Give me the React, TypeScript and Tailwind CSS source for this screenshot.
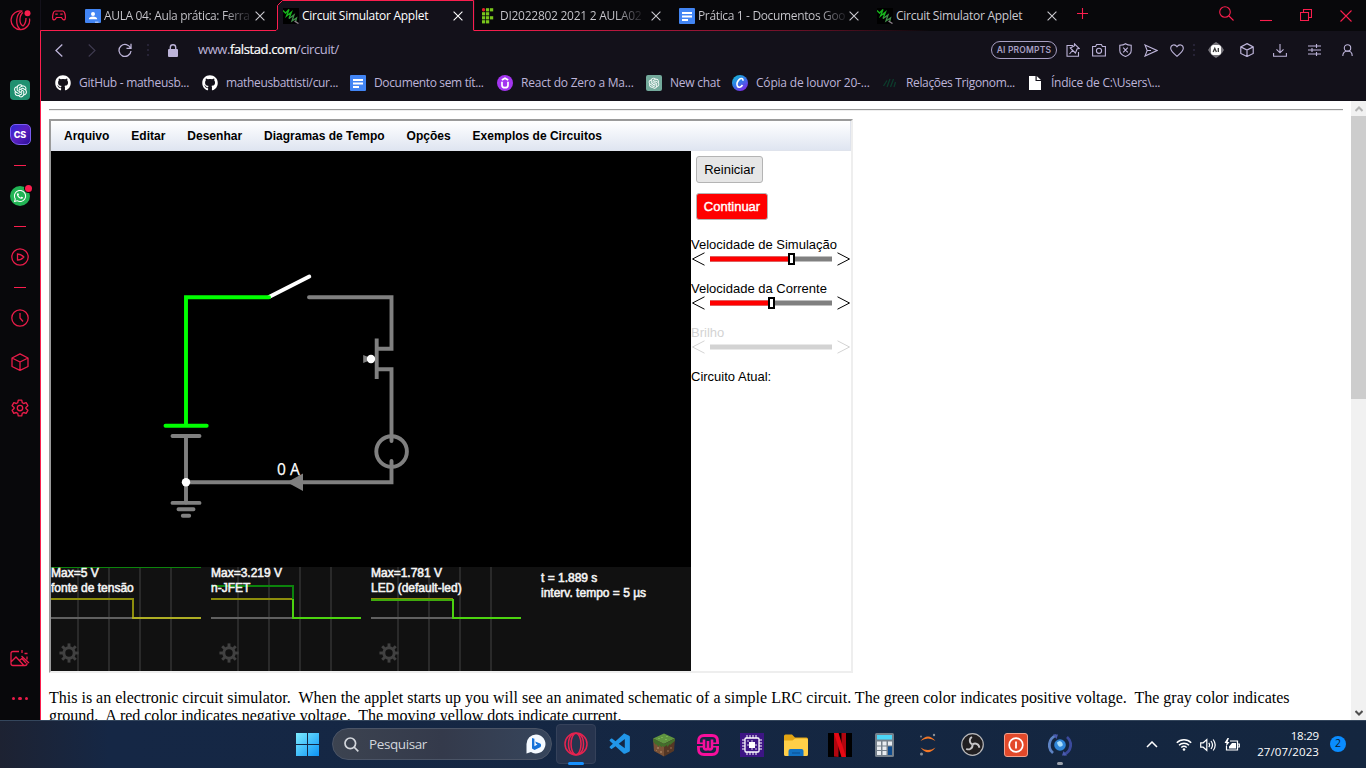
import React from "react";
import { FaGithub, FaWhatsapp } from "react-icons/fa";
import { AiOutlineOpenAI } from "react-icons/ai";
import { VscVscode } from "react-icons/vsc";

const UI = "font-['Open_Sans','Noto_Sans',sans-serif]";
const ARIAL = "font-['Liberation_Sans',Arial,sans-serif]";

type SvgProps = { children: React.ReactNode; w?: number; h?: number; box?: string; className?: string; sw?: number };

function Line({ children, w = 16, h = 16, box, className = "", sw = 1.1 }: SvgProps) {
  return (
    <svg width={w} height={h} viewBox={box ?? `0 0 ${w} ${h}`} fill="none" stroke="currentColor" strokeWidth={sw} className={`block shrink-0 ${className}`}>
      {children}
    </svg>
  );
}

function Slot({ className, children }: { className: string; children?: React.ReactNode }) {
  return <div className={`flex shrink-0 items-center justify-center ${className}`}>{children}</div>;
}

function Cross({ className = "" }: { className?: string }) {
  return (
    <Line w={10} h={10} className={className}>
      <path d="M.6 .6 9.4 9.4M9.4 .6 .6 9.4" />
    </Line>
  );
}

function Cube() {
  return (
    <Line w={18} h={18} sw={1.3}>
      <path d="M9 .8 17 5v8.500L9 17.400 1 13.500V5ZM1 5l8 4 8-4M9 9v8.400" strokeLinejoin="round" />
    </Line>
  );
}

function DocsIcon() {
  return (
    <svg width="16" height="16" viewBox="0 0 16 16" className="block shrink-0">
      <rect width="16" height="16" rx="1" fill="#4285f4" />
      <path d="M3 4h10v2H3zM3 7.500h10v2H3zM3 11h6v2H3z" fill="#fff" />
    </svg>
  );
}

function ClassroomIcon() {
  return (
    <svg width="16" height="16" viewBox="0 0 16 16" className="block shrink-0">
      <rect y="1" width="16" height="14" rx="1" fill="#4285f4" />
      <circle cx="8" cy="6" r="2" fill="#fff" />
      <path d="M3.800 11.300c0-2 2-2.800 4.200-2.800s4.200.8 4.200 2.800z" fill="#fff" />
      <path d="M10 13.500h3.500V15H10z" fill="#9fc1fa" />
    </svg>
  );
}

function CircuitIcon() {
  return (
    <svg width="16" height="16" viewBox="0 0 16 16" fill="none" className="block shrink-0">
      <rect width="16" height="16" fill="#000" />
      <path d="M0 2.500 2.500 5 6 1.500 3.500 8 8.500 4 6 10.500" stroke="#16b51c" strokeWidth="1.300" />
      <path d="M6 10.500 11 7 9 13 13.500 10 12.500 14" stroke="#3f8f48" strokeWidth="1.300" />
      <path d="m11.500 13 4 2.600" stroke="#8c7f8c" strokeWidth="1.300" />
    </svg>
  );
}

function InstituteIcon() {
  const cells: [number, number][] = [[4, 0], [8, 0], [0, 4], [4, 4], [0, 8], [4, 8], [8, 8], [0, 12], [4, 12]];
  return (
    <svg width="12" height="16" viewBox="0 0 12 16" className="block shrink-0">
      <circle cx="1.600" cy="1.800" r="1.700" fill="#e0202c" />
      {cells.map(([x, y]) => (
        <rect key={`${x}-${y}`} x={x} y={y + 0.2} width="3.200" height="3.200" fill="#79c51c" />
      ))}
    </svg>
  );
}

function Tab({ icon, label, active, tight, fade }: { icon: React.ReactNode; label: string; active?: boolean; tight?: boolean; fade?: boolean }) {
  return (
    <div className={`flex h-[31px] w-[198px] shrink-0 items-center pl-[6px] pr-3 ${active ? "bg-[#13111a] text-white" : "text-[#cbcad0]"}`}>
      {icon}
      <span
        className={`ml-[3px] text-[12px] whitespace-nowrap ${tight ? "tracking-[-0.35px]" : "tracking-[-0.27px]"} ${
          fade ? "bg-linear-to-r from-[#cbcad0] from-82% to-[#25242a] bg-clip-text text-transparent" : ""
        }`}
      >
        {label}
      </span>
      <Cross className="ml-auto" />
    </div>
  );
}

function TabBar() {
  return (
    <div className="relative flex h-[31px] bg-[#08080b]">
      <Slot className="w-[38px] pr-[2px] text-[#fa1e4e]">
        <Line w={14} h={11} sw={1.2}>
          <path d="M3 1h8c1.500 0 2.400 3.800 2.400 6.500 0 3-2.200 3.200-3.400.8L9.500 7.500h-5L4 8.300C2.800 10.700.6 10.500.6 7.500.6 4.800 1.500 1 3 1Z" />
          <path d="M3.300 4.200h2.400M8.300 4.200h2.400" />
        </Line>
      </Slot>
      <Tab icon={<ClassroomIcon />} label="AULA 04: Aula prática: Ferra" fade tight />
      <Tab icon={<CircuitIcon />} label="Circuit Simulator Applet" active />
      <Tab icon={<span className="ml-px mr-[3px]"><InstituteIcon /></span>} label="DI2022802 2021 2 AULA02" fade />
      <Tab icon={<DocsIcon />} label="Prática 1 - Documentos Goo" fade tight />
      <Tab icon={<CircuitIcon />} label="Circuit Simulator Applet" />
      <div className="flex flex-1 items-center text-[#fa1e4e]">
        <Line w={12} h={12} className="ml-[8px] -mt-1"><path d="M5.500 0v11M0 5.500h11" /></Line>
        <Line w={15} h={15} className="ml-[130px] -mt-1"><circle cx="6" cy="6" r="5.300" /><path d="m10 10 4.500 4.500" /></Line>
        <Line w={12} h={12} className="ml-[26px]"><path d="M0 10.500h12" /></Line>
        <Line w={12} h={12} className="ml-[28px] -mt-[2px]"><path d="M.5 3.500h8v8h-8zM3.500 3.500v-3h8v8h-3" /></Line>
        <Line w={12} h={12} className="ml-[28px]"><path d="m.5.5 11 11m0-11-11 11" /></Line>
      </div>
      <svg width="1326" height="31" viewBox="40 0 1326 31" fill="none" className="absolute top-0 -left-px">
        <defs>
          <linearGradient id="edge" gradientUnits="userSpaceOnUse" x1="480" x2="930" y1="0" y2="0">
            <stop stopColor="#fa1e4e" />
            <stop offset=".4" stopColor="#a01638" />
            <stop offset="1" stopColor="#fa1e4e" stopOpacity="0" />
          </linearGradient>
        </defs>
        <path d="M277 0h6l-6 6z" fill="#08080b" />
        <path d="M40.500 31v-.5H276l1.500-1.500V5.500l5-5H473.500V30.500" stroke="#fa1e4e" />
        <path d="M474 30h456v1H474z" fill="url(#edge)" />
      </svg>
    </div>
  );
}

function AddressBar() {
  return (
    <div className="flex h-[38px] items-center text-[#bdb4d9]">
      <Slot className="w-9"><Line w={8} h={13} sw={1.3}><path d="M7.300.5 1 6.500l6.300 6" /></Line></Slot>
      <Slot className="w-[30px] text-[#3f3b50]"><Line w={8} h={13}><path d="M.7.500 7 6.500l-6.300 6" /></Line></Slot>
      <Slot className="w-9"><Line w={14} h={14} sw={1.3}><path d="M12.600 5.200A6 6 0 1 0 13 8M13 .8v4.600H8.500" /></Line></Slot>
      <Slot className="w-[10px] text-[#34304a]"><Line w={2} h={12} sw={1.2}><path d="M1 0v2M1 5v2M1 10v2" /></Line></Slot>
      <Slot className="w-10">
        <Line w={10} h={13} sw={1.4}><path d="M2.300 6V3.500a2.700 2.700 0 0 1 5.400 0V6" /><rect y="5" width="10" height="8" rx="1" fill="currentColor" stroke="none" /></Line>
      </Slot>
      <div className="ml-[5px] text-[13px] tracking-[-0.4px]">www.<span className="text-white [-webkit-text-stroke:0.2px_#fff]">falstad.com</span>/circuit/</div>
      <div className="ml-auto flex items-center">
        <div className="mr-[3px] flex h-[18px] w-[66px] items-center justify-center rounded-full border border-[#a79fc2] font-['Inter',sans-serif] text-[8.5px] font-semibold tracking-[0.2px] text-[#a79fc2]">AI PROMPTS</div>
        <Slot className="w-[26px]"><Line w={14} h={14}><path d="M7 2.500H1v10.800h11.500V9" /><path d="m8.500.8 4.700 4.700-2 .3-1.800 4.200-5.200-5L8.300 3ZM6.500 7.500 3.500 11" /></Line></Slot>
        <Slot className="w-[26px]"><Line w={14} h={14}><path d="M.6 3.500h3l1-2h4.800l1 2h3v9.500H.6z" /><circle cx="7" cy="7.800" r="2.600" /></Line></Slot>
        <Slot className="w-[26px]"><Line w={13} h={14}><path d="M6.500.7c1.800 1.300 3.700 1.500 5.700 1.500v5.300c0 3-3 5-5.700 6C3.800 12.500.8 10.500.8 7.500V2.200c2 0 3.900-.2 5.700-1.500ZM4.200 4.700l4.600 4.600m0-4.600L4.200 9.300" /></Line></Slot>
        <Slot className="w-[26px]"><Line w={14} h={13}><path d="M1 .9 13 6.500 1 12.100 3.200 6.500ZM3.200 6.500H7" /></Line></Slot>
        <Slot className="w-[26px]"><Line w={14} h={13}><path d="M7 12.300C3 9 .7 7 .7 4.300.7.600 5 -.4 7 2.800 9-.4 13.300.600 13.300 4.300 13.300 7 11 9 7 12.300Z" /></Line></Slot>
        <Slot className="w-2 text-[#34304a]"><Line w={2} h={12} sw={1.2}><path d="M1 0v2M1 5v2M1 10v2" /></Line></Slot>
        <Slot className="w-9">
          <svg width="16" height="16" viewBox="0 0 16 16" className="block">
            <path d="M8 0l3 2 3 3 2 3-2 3-3 3-3 2-3-2-3-3-2-3 2-3 3-3z" fill="#77757c" />
            <rect x="3" y="3" width="10" height="10" rx="2.500" fill="#fff" />
            <path d="M5.200 10 6.800 6.300 8.400 10M10.300 6v4" stroke="#333" strokeWidth="1.300" fill="none" />
          </svg>
        </Slot>
        <Slot className="w-[26px]"><Line w={14} h={14} box="0 0 18 18" sw={1.5}><path d="M9 .8 17 5v8.500L9 17.400 1 13.500V5ZM1 5l8 4 8-4M9 9v8.400" /></Line></Slot>
        <Slot className="w-10"><Line w={14} h={14}><path d="M7 1v8.500M3.500 6.300 7 9.800l3.500-3.500M.6 10v3.200h12.800V10" /></Line></Slot>
        <Slot className="w-7"><Line w={13} h={12}><path d="M0 2h13M0 6h13M0 10h13M8.500 0v4M4 4v4M8.500 8v4" /></Line></Slot>
        <Slot className="w-[38px]"><Line w={11} h={12}><circle cx="5.500" cy="4" r="3.200" /><path d="M.8 12C.8 9 2.500 7 5.500 7s4.700 2 4.700 5" /></Line></Slot>
      </div>
    </div>
  );
}

function Bookmark({ className = "", icon, label }: { className?: string; icon: React.ReactNode; label: string }) {
  return (
    <div className={`flex shrink-0 items-center gap-2 ${className}`}>
      {icon}
      <span className="text-[12px] whitespace-nowrap">{label}</span>
    </div>
  );
}

function Bookmarks() {
  return (
    <div className="flex h-8 items-center pb-1 pl-[14px] text-[#bdb4d9]">
      <Bookmark className="w-[147px] tracking-[-0.28px]" icon={<FaGithub size={16} color="#fff" />} label="GitHub - matheusb..." />
      <Bookmark className="w-[148px] tracking-[-0.35px]" icon={<FaGithub size={16} color="#fff" />} label="matheusbattisti/cur..." />
      <Bookmark className="w-[147px] tracking-[-0.35px]" icon={<DocsIcon />} label="Documento sem tít..." />
      <Bookmark
        className="w-[149px] tracking-[-0.22px]"
        icon={
          <svg width="16" height="16" viewBox="0 0 16 16" className="block" fill="none">
            <circle cx="8" cy="8" r="8" fill="#a435f0" />
            <path d="M5 6.800v3.400c0 1.700 1.200 2.500 3 2.500s3-.8 3-2.500V6.800M4.800 5 8 3.200 11.200 5" stroke="#fff" strokeWidth="1.700" />
          </svg>
        }
        label="React do Zero a Ma..."
      />
      <Bookmark className="w-[86px] tracking-[-0.25px]" icon={<Slot className="size-4 rounded-[2px] bg-[#74aa9c] text-white"><AiOutlineOpenAI size={14} /></Slot>} label="New chat" />
      <Bookmark
        className="w-[150px] tracking-[-0.2px]"
        icon={
          <svg width="16" height="16" viewBox="0 0 16 16" className="block" fill="none">
            <defs><linearGradient id="canva" x2=".7" y2="1"><stop stopColor="#14c4d0" /><stop offset=".5" stopColor="#2f7de8" /><stop offset="1" stopColor="#7d2ae8" /></linearGradient></defs>
            <circle cx="8" cy="8" r="8" fill="url(#canva)" />
            <path d="M10.800 5.800c.8-2.600-2-3-3.700-1.200-1.900 2-2.500 4.500-1.800 6.300.9 2.200 3.800 1.500 5.200-.9" stroke="#fff" strokeWidth="1.600" />
          </svg>
        }
        label="Cópia de louvor 20-..."
      />
      <Bookmark className="w-[145px] tracking-[-0.35px]" icon={<Line w={16} h={16} sw={1.3} className="text-[#0d3b2c]"><path d="M1.500 11 5 5.500M5 12 8 4M8.500 12l3-8M12 12l1.500-5" /></Line>} label="Relações Trigonom..." />
      <Bookmark
        className="tracking-[-0.25px]"
        icon={<svg width="16" height="16" viewBox="0 0 16 16" className="block"><path d="M2 1h6.500v5H14v9H2zM9.700 1 14 4.900H9.700z" fill="#fff" /></svg>}
        label="Índice de C:\Users\..."
      />
    </div>
  );
}

function SideBar() {
  const dash = <span className="h-px w-3 bg-[#fa1e4e]" />;
  const dot = "size-[3.500px] rounded-full bg-[#e81c49]";
  return (
    <div className="flex w-10 shrink-0 flex-col bg-[#08080b] text-[#e81c49]">
      <Slot className="h-10">
        <Line w={21} h={21} sw={1.3}>
          <path d="M12.500 1.200A9.300 9.300 0 1 0 19.500 8.500" />
          <path d="M12 1.300C5.500 3.500 5 15.500 10.500 19.800" />
          <path d="M13 2.500C8.800 6 9 14 13 16c1.800-1.500 3-4.500 3-8" />
          <circle cx="17.500" cy="3.300" r="3" fill="#fa1e4e" stroke="none" />
        </Line>
      </Slot>
      <Slot className="mt-[30px] h-10"><Slot className="size-5 rounded-[4px] bg-[#1f9070] text-white"><AiOutlineOpenAI size={17} /></Slot></Slot>
      <Slot className="h-[49px]">
        <div className="flex size-[21px] items-center justify-center rounded-[5px] rounded-bl-[9px] border border-[#7a5cf0] bg-linear-to-br from-[#2a25d6] via-[#5b1fc0] to-[#2b0e9a] font-['Inter',sans-serif] text-[9px] font-extrabold text-white">CS</div>
      </Slot>
      <Slot className="h-3">{dash}</Slot>
      <Slot className="h-[50px]">
        <div className="relative flex size-5 items-center justify-center rounded-full bg-[#22b455] text-white">
          <FaWhatsapp size={14} />
          <span className="absolute -top-px -right-[2px] size-[7px] rounded-full bg-[#fa1e4e] ring-1 ring-[#08080b]" />
        </div>
      </Slot>
      <Slot className="h-[10px]">{dash}</Slot>
      <Slot className="h-[52px]"><Line w={18} h={18} sw={1.3}><circle cx="9" cy="9" r="8.200" /><path d="M6.500 6v6c3 0 5-1.500 6.300-3C11.500 7.500 9.500 6 6.500 6Z" /></Line></Slot>
      <Slot className="h-2">{dash}</Slot>
      <Slot className="h-[54px]"><Line w={18} h={18} sw={1.3}><circle cx="9" cy="9" r="8.200" /><path d="M9 4v5l3 3.500" /></Line></Slot>
      <Slot className="h-[34px]"><Cube /></Slot>
      <Slot className="h-[58px]">
        <Line w={18} h={18} box="0 0 24 24" sw={1.8}>
          <circle cx="12" cy="12" r="3.600" />
          <path d="M9.700 1.500h4.600l.7 3.400 1.900 1.100 3.300-1.100 2.300 4-2.600 2.300v1.600l2.600 2.300-2.300 4-3.300-1.100-1.900 1.100-.7 3.400H9.700L9 19.100 7.100 18l-3.300 1.100-2.300-4 2.600-2.300v-1.600L1.500 8.900l2.300-4L7.100 6 9 4.900Z" strokeLinejoin="round" />
        </Line>
      </Slot>
      <div className="flex-1" />
      <Slot className="h-[38px]">
        <Line w={20} h={17} sw={1.3}>
          <path d="M9 1.500H3Q1 1.500 1 3.500v10q0 2 2 2h12q2 0 2-2V13M1.500 11.500 6 7l7.500 8M9 11l3-2.500 4 4.500M11.500 6l7.500 7M14.500 3.500h3M17 6.500v3M12 0v3" />
        </Line>
      </Slot>
      <Slot className="h-[43px] gap-[3px]"><i className={dot} /><i className={dot} /><i className={dot} /></Slot>
    </div>
  );
}

function Gear({ x, y }: { x: number; y: number }) {
  return (
    <g transform={`translate(${x} ${y})`} stroke="#414141" fill="none">
      <circle r="5.200" strokeWidth="3" />
      {[0, 45, 90, 135, 180, 225, 270, 315].map((a) => (
        <path key={a} d="M0-6v-3.600" strokeWidth="2.900" transform={`rotate(${a})`} />
      ))}
    </g>
  );
}

function Scope({ x }: { x: number }) {
  return (
    <g>
      <path d={`M${x + 27} 567v104M${x + 58} 567v104M${x + 89} 567v104M${x + 120} 567v104`} stroke="#2a2a2a" strokeWidth="2" />
      <path d={`M${x} 618h150`} stroke="#606060" strokeWidth="2" />
      <Gear x={x + 18} y={653} />
    </g>
  );
}

function Circuit() {
  return (
    <svg width="640" height="520" viewBox="51 151 640 520" className={`block shrink-0 bg-black ${ARIAL}`} fill="none">
      <g strokeWidth="3.900" strokeLinecap="round">
        <g stroke="#808080">
          <path d="M309 297.300H391.500V348.800H378M378 369.300H391.500V441M391.500 461V482.300H186M186 436V503M172.500 436H199.500M172.500 502.900h27M178.500 509.200h15M182.800 515.700h6.400" />
          <circle cx="391.600" cy="451.500" r="15.300" />
          <path d="M376.700 338.500v40.500" strokeLinecap="butt" />
        </g>
        <path d="M269 297 309.300 276.600" stroke="#fff" />
        <path d="M269 297.300H186V425.700M165.500 425.700H206.700" stroke="#0f0" />
      </g>
      <path d="M287 482.300 303 473.500V491ZM363.200 355l5 2v4l-5 2z" fill="#808080" />
      <circle cx="371" cy="359" r="4.200" fill="#fff" />
      <circle cx="186" cy="482.300" r="4.200" fill="#fff" />
      <text x="277" y="475" fill="#fff" stroke="#fff" strokeWidth=".25" className={UI} fontSize="15.500">0 A</text>

      <path d="M51 567h640v104H51z" fill="#111" />
      <Scope x={51} />
      <Scope x={211} />
      <Scope x={371} />
      <g strokeWidth="2">
        <path d="M51 567.500h150" stroke="#0c840c" strokeWidth="1" />
        <path d="M51 599h82v19" stroke="#8d8d0c" />
        <path d="M132 618h69" stroke="#aeae24" />
        <path d="M211 599h82" stroke="#8d8d0c" />
        <path d="M211 586h82v13" stroke="#0c840c" />
        <path d="M293 599v19h68" stroke="#4cd410" />
        <path d="M371 599.500h82" stroke="#8d8d0c" strokeWidth="3" />
        <path d="M371 600h82" stroke="#3faa0c" />
        <path d="M453 599v19h68" stroke="#4cd410" />
      </g>
      <g fill="#f4f4f4" stroke="#f4f4f4" strokeWidth=".55" fontSize="12">
        <text x="51" y="577">Max=5 V</text>
        <text x="51" y="592">fonte de tensão</text>
        <text x="211" y="577">Max=3.219 V</text>
        <text x="211" y="592">n-JFET</text>
        <text x="371" y="577">Max=1.781 V</text>
        <text x="371" y="592">LED (default-led)</text>
        <text x="541" y="582">t = 1.889 s</text>
        <text x="541" y="597">interv. tempo = 5 µs</text>
      </g>
    </svg>
  );
}

function Slider({ label, value, disabled }: { label: string; value?: number; disabled?: boolean }) {
  return (
    <div className={`h-11 ${disabled ? "text-[#d3d3d3]" : "text-black"}`}>
      <div className="h-[15px] leading-[15px] whitespace-nowrap">{label}</div>
      <svg width="160" height="14" viewBox="0 0 160 14" fill="none" className="block">
        <path d="M13.500.8 1.500 7l12 6.200M146.500.8l12 6.200-12 6.200" stroke="currentColor" />
        <path d="M19 7h122" stroke={disabled ? "#d3d3d3" : "#808080"} strokeWidth="5" />
        {value !== undefined && (
          <g>
            <path d={`M19 7H${value}`} stroke="#f00" strokeWidth="5" />
            <rect x={value - 2.5} y="2" width="5" height="10" fill="#fff" stroke="#000" strokeWidth="2" />
          </g>
        )}
      </svg>
    </div>
  );
}

function Applet() {
  return (
    <div className={`mt-2 h-[554px] w-[804px] border-2 border-t-[#9a9a9a] border-r-[#eeeeee] border-b-[#eeeeee] border-l-[#9a9a9a] ${ARIAL}`}>
      <div className="flex h-[30px] items-center gap-[22px] border border-t-0 border-l-0 border-[#dfe3ec] bg-linear-to-b from-white to-[#dfe5f1] pl-[13px] text-[12px] font-bold text-black">
        <span>Arquivo</span><span>Editar</span><span>Desenhar</span><span>Diagramas de Tempo</span><span>Opções</span><span>Exemplos de Circuitos</span>
      </div>
      <div className="flex">
        <Circuit />
        <div className="flex w-40 flex-col items-start text-[13px] text-black">
          <button className="mt-[5px] ml-[5px] h-[27px] w-[67px] rounded-[3px] border border-[#b4b4b4] bg-[#e6e6e6]">Reiniciar</button>
          <button className="mt-[10px] mb-[17px] ml-[5px] h-[27px] w-[72px] rounded-[3px] border border-[#b4b4b4] bg-[#ff0000] text-white [-webkit-text-stroke:0.4px_#fff]">Continuar</button>
          <Slider label="Velocidade de Simulação" value={100.5} />
          <Slider label="Velocidade da Corrente" value={80.5} />
          <Slider label="Brilho" disabled />
          <div className="leading-[15px]">Circuito Atual:</div>
        </div>
      </div>
    </div>
  );
}

function Page() {
  return (
    <div className="flex h-[619px] bg-white">
      <div className="min-w-0 flex-1 overflow-hidden pt-2 pr-2 pl-2">
        <div className="h-[2px] border-t border-b border-t-[#9a9a9a] border-b-[#eeeeee]" />
        <Applet />
        <p className="mt-4 font-['Liberation_Serif',serif] text-[16px] leading-[18px] whitespace-nowrap text-black">
          This is an electronic circuit simulator.&nbsp; When the applet starts up you will see an animated schematic of a simple LRC circuit. The green color indicates positive voltage.&nbsp; The gray color indicates
          <br />
          <span className="tracking-[-0.02px]">ground.&nbsp; A red color indicates negative voltage.&nbsp; The moving yellow dots indicate current.</span>
        </p>
      </div>
      <div className="flex w-[15px] flex-col items-center bg-[#f1f1f1]">
        <Slot className="h-[15px] text-[#b3b3b3]"><Line w={8} h={6} sw={2}><path d="M.5 5 4 1.500 7.500 5" /></Line></Slot>
        <div className="h-[283px] w-full bg-[#cdcdcd]" />
        <Slot className="mt-auto h-[15px] text-[#505050]"><Line w={8} h={6} sw={2}><path d="M.5 1 4 4.500 7.500 1" /></Line></Slot>
      </div>
    </div>
  );
}

function GrassBlock() {
  return (
    <svg width="24" height="24" viewBox="0 0 24 24">
      <path d="M12 .500 23 5.500 12 11 1 5.500Z" fill="#5f9440" />
      <path d="M1 5.500 12 11V23.500L2 18Z" fill="#7a5237" />
      <path d="M23 5.500 12 11V23.500L22 18Z" fill="#553725" />
      <path d="M1 5.500 12 11v3l-2-1v1.500L7 12v2l-3-3v1L1.200 8.500ZM23 5.500 12 11v3l3-2v2l3-3v1l4.800-4Z" fill="#436e2b" />
      <path d="M5 14h2v2H5zM8 18h2v2H8zM4 17h1v1H4z" fill="#9b7354" />
      <path d="M15 17h2v2h-2zM18 14h2v2h-2z" fill="#77523a" />
      <path d="M9 4h2v1H9zM13 6h2v1h-2zM6 5h2v1H6zM14 3h2v1h-2z" fill="#78b052" />
    </svg>
  );
}

function TaskBar() {
  return (
    <div className="relative flex h-12 items-center border-t border-[#34465c] bg-linear-to-r from-[#1d2232] via-[#152745] via-8% to-[#14263f]">
      <svg width="23" height="23" viewBox="0 0 23 23" className="ml-[296px] shrink-0">
        <defs><linearGradient id="win" gradientUnits="userSpaceOnUse" x1="0" y1="0" x2="23" y2="23"><stop stopColor="#7cebff" /><stop offset="1" stopColor="#0c93f5" /></linearGradient></defs>
        <path d="M0 0h11v11H0zM12 0h11v11H12zM0 12h11v11H0zM12 12h11v11H12z" fill="url(#win)" />
      </svg>
      <div className="mb-px ml-[13px] flex h-8 w-[220px] shrink-0 items-center rounded-full border border-[#4b5466] bg-linear-to-r from-[#3c4350] via-[#343a4b] to-[#36455c] pr-[5px] pl-[11px] text-[#d3d6dc]">
        <Line w={15} h={15} sw={1.7}><circle cx="6.300" cy="6.300" r="5.300" /><path d="m10 10 4.300 4.300" /></Line>
        <span className="ml-[10px] text-[13.500px] tracking-[-0.4px]">Pesquisar</span>
        <svg width="20" height="20" viewBox="0 0 20 20" className="ml-auto">
          <path d="M10 .5A9.500 9.500 0 1 1 5 18.100L.5 19.500V10A9.500 9.500 0 0 1 10 .5Z" fill="#f4f9ff" />
          <path d="M6 4l2.400.8v7.500L11.500 10.500 10 9.800 9.200 7.600l5 1.800c1.200.6 1.200 3 0 3.800L8.500 16 6 14.500Z" fill="#1672d8" />
        </svg>
      </div>
      <div className="ml-[2px] flex">
        <div className="relative flex h-10 w-11 items-center justify-center">
          <div className="mb-px flex size-10 items-center justify-center rounded-[4px] border border-[#35415a] bg-[#27344e] text-[#e5234f]">
            <Line w={24} h={24} sw={1.500}><circle cx="12" cy="12" r="11" /><ellipse cx="12" cy="12" rx="5" ry="10.800" /><path d="M9 2c-6 3-6 17 0 20M15 2c6 3 6 17 0 20" /></Line>
          </div>
          <span className="absolute bottom-0 h-[3px] w-4 rounded-full bg-[#1791ff]" />
        </div>
        <Slot className="w-11 text-[#2196e8]"><VscVscode size={25} /></Slot>
        <Slot className="w-11"><GrassBlock /></Slot>
        <Slot className="w-11">
          <svg width="24" height="24" viewBox="0 0 24 24" fill="none" stroke="#f70f9c">
            <path d="M2.500 10.500V8Q2.500 2.500 8 2.500h8q5.500 0 5.500 5.500v2.500M2.500 13.500V16q0 5.500 5.500 5.500h8q5.500 0 5.500-5.500v-2.500" strokeWidth="2.800" />
            <path d="M1 10.200h6M17 10.200h6M1 13.800h6M17 13.800h6" strokeWidth="1.600" />
            <path d="M8 6.500v7.500q0 2.500 2 2.500T12 14V8v6q0 2.500 2 2.500T16 14V6.500" strokeWidth="2.600" />
          </svg>
        </Slot>
        <Slot className="w-11">
          <svg width="24" height="24" viewBox="0 0 24 24" fill="none" stroke="#fff">
            <rect width="24" height="24" fill="#3d1584" stroke="none" />
            <rect x="5" y="5" width="14" height="14" rx="1" strokeWidth="1.300" />
            <rect x="9" y="9" width="6" height="6" fill="#fff" stroke="none" />
            <path d="M2 7h3M2 10h3M2 13h3M2 16h3M19 7h3M19 10h3M19 13h3M19 16h3M7 2v3M10 2v3M13 2v3M16 2v3M7 19v3M10 19v3M13 19v3M16 19v3" />
            <path d="M7 8h2M7 12h2M15 12h2M12 7v2M12 15v2M15 16h2" strokeWidth=".8" />
          </svg>
        </Slot>
        <Slot className="w-11">
          <svg width="24" height="22" viewBox="0 0 24 22">
            <path d="M0 2Q0 .5 1.500.5H8l3 3h11.500Q24 3.500 24 5v5H0Z" fill="#e2a413" />
            <path d="M0 6.500h8.500L11 4.500h11.500Q24 4.500 24 6v14.500Q24 22 22.500 22h-21Q0 22 0 20.500Z" fill="#ffcf48" />
            <path d="M4.500 22v-5q0-2 2-2h11q2 0 2 2v5Z" fill="#1272c4" /><path d="M8 18.500h8v1H8z" fill="#0a4f92" />
          </svg>
        </Slot>
        <Slot className="w-11">
          <svg width="24" height="24" viewBox="0 0 24 24"><path d="M0 0h24v24H0z" fill="#000" /><path d="M6 0h4.500v24L6 23.500zM13.500 0H18v24l-4.500-.5z" fill="#b1060f" /><path d="M6 0h4.500L18 24h-4.500z" fill="#e50914" /></svg>
        </Slot>
        <Slot className="w-11">
          <svg width="19" height="24" viewBox="0 0 19 24">
            <rect width="19" height="24" rx="1.500" fill="#75808b" /><path d="M2 2h15v4.500H2z" fill="#4cd6f7" />
            <path d="M2 8.500h4v4H2zM7.500 8.500h4v4h-4zM13 8.500h4v4h-4zM2 13.500h4v3.500H2zM7.500 13.500h4v3.500h-4zM2 18h4v4H2zM7.500 18h4v4h-4z" fill="#e8ecf0" /><path d="M13 13.500h4V22h-4z" fill="#0e4b8d" />
          </svg>
        </Slot>
        <Slot className="w-11">
          <svg width="18" height="23" viewBox="0 0 18 23">
            <path d="M1.500 8Q9-1 16.500 8 9 2.800 1.500 8ZM1.500 14.500Q9 24 16.500 14.500 9 19.700 1.500 14.500Z" fill="#f37726" />
            <circle cx="15" cy="2" r="1.200" fill="#8b8f96" /><circle cx="2.500" cy="21" r="1.500" fill="#8b8f96" /><circle cx="2" cy="3.500" r=".9" fill="#8b8f96" />
          </svg>
        </Slot>
        <Slot className="w-11">
          <svg width="23" height="23" viewBox="0 0 23 23" fill="none">
            <circle cx="11.500" cy="11.500" r="10.800" fill="#211f21" stroke="#b9b9bb" strokeWidth="1.200" />
            {[0, 120, 240].map((a) => (
              <path key={a} transform={`rotate(${a} 11.500 11.500)`} d="M11.500 11.500C8 10 8 5.500 11 4" stroke="#c6c5c8" strokeWidth="1.900" />
            ))}
          </svg>
        </Slot>
        <Slot className="w-11">
          <svg width="24" height="24" viewBox="0 0 24 24" fill="none">
            <rect x=".5" y=".5" width="23" height="23" rx="2.500" fill="#e3492a" stroke="#f2a08d" />
            <circle cx="12" cy="12" r="6.800" stroke="#fff" strokeWidth="1.700" /><path d="M12 8.500v7" stroke="#fff" strokeWidth="1.800" />
          </svg>
        </Slot>
        <div className="relative flex w-11 items-center justify-center">
          <svg width="24" height="24" viewBox="0 0 24 24" fill="none">
            <circle cx="12" cy="12" r="5.800" fill="#2f86d8" /><path d="M9 9.500q3-3 5 0t-1 4-4-4Z" fill="#a8defc" />
            <path d="M8 2.500A10.300 10.300 0 0 0 5 20" stroke="#5d83c4" strokeWidth="2.800" /><path d="M16 21.500A10.300 10.300 0 0 0 19 4" stroke="#3b4a9c" strokeWidth="2.800" />
            <path d="M5 1.500h5L8.500 6ZM19 22.500h-5l1.500-4.500Z" fill="#4a5bb0" />
          </svg>
          <span className="absolute bottom-0 h-[3px] w-[6px] rounded-full bg-[#9aa1ac]" />
        </div>
      </div>
      <div className="ml-auto flex items-center pr-5 text-white">
        <Line w={12} h={7} sw={1.500} className="mr-[18px]"><path d="m1 6 5-5 5 5" /></Line>
        <Line w={16} h={13} sw={1.500} className="mr-[8px]"><path d="M.8 4.800a10.200 10.200 0 0 1 14.400 0M3 7.300a7 7 0 0 1 10 0M5.300 9.500a4 4 0 0 1 5.400 0" /><circle cx="8" cy="11.500" r="1.300" fill="currentColor" stroke="none" /></Line>
        <Line w={16} h={14} sw={1.200} className="mr-[8px]"><path d="M.7 4.800h2.500L6.800 1.500v11L3.200 9.200H.7ZM8.800 4.800q1.500 2.200 0 4.400M11 3q3 4 0 8M13.200 1.500q4 5.500 0 11" /></Line>
        <Line w={16} h={14} sw={1.200} className="mr-[17px]"><path d="M6 3h7.500v9h-11V8M14 6h1.300v3H14" /><path d="M5 10V8.500L8 5h4v5.500H5ZM3.500 0 .5 5h2L2 8.500 5.500 4h-2L5 0Z" fill="currentColor" stroke="none" /></Line>
        <div className="mr-[11px] mb-px w-[62px] text-right text-[11.500px] leading-4 whitespace-nowrap"><div className="tracking-[-0.2px]">18:29</div><div className="tracking-[0.08px]">27/07/2023</div></div>
        <Slot className="mb-px size-4 rounded-full bg-[#0a8cff] text-[10.500px] text-[#0c1a2c]">2</Slot>
      </div>
    </div>
  );
}

export default function App() {
  return (
    <div className={`flex h-[768px] w-[1366px] flex-col overflow-hidden bg-[#13111a] ${UI}`}>
      <div className="flex h-[720px]">
        <SideBar />
        <div className="relative flex w-[1326px] flex-col">
          <div className="pl-px">
            <TabBar />
          </div>
          <div className="flex-1 border-l border-[#fa1e4e]">
            <AddressBar />
            <Bookmarks />
            <Page />
          </div>
        </div>
      </div>
      <TaskBar />
    </div>
  );
}
